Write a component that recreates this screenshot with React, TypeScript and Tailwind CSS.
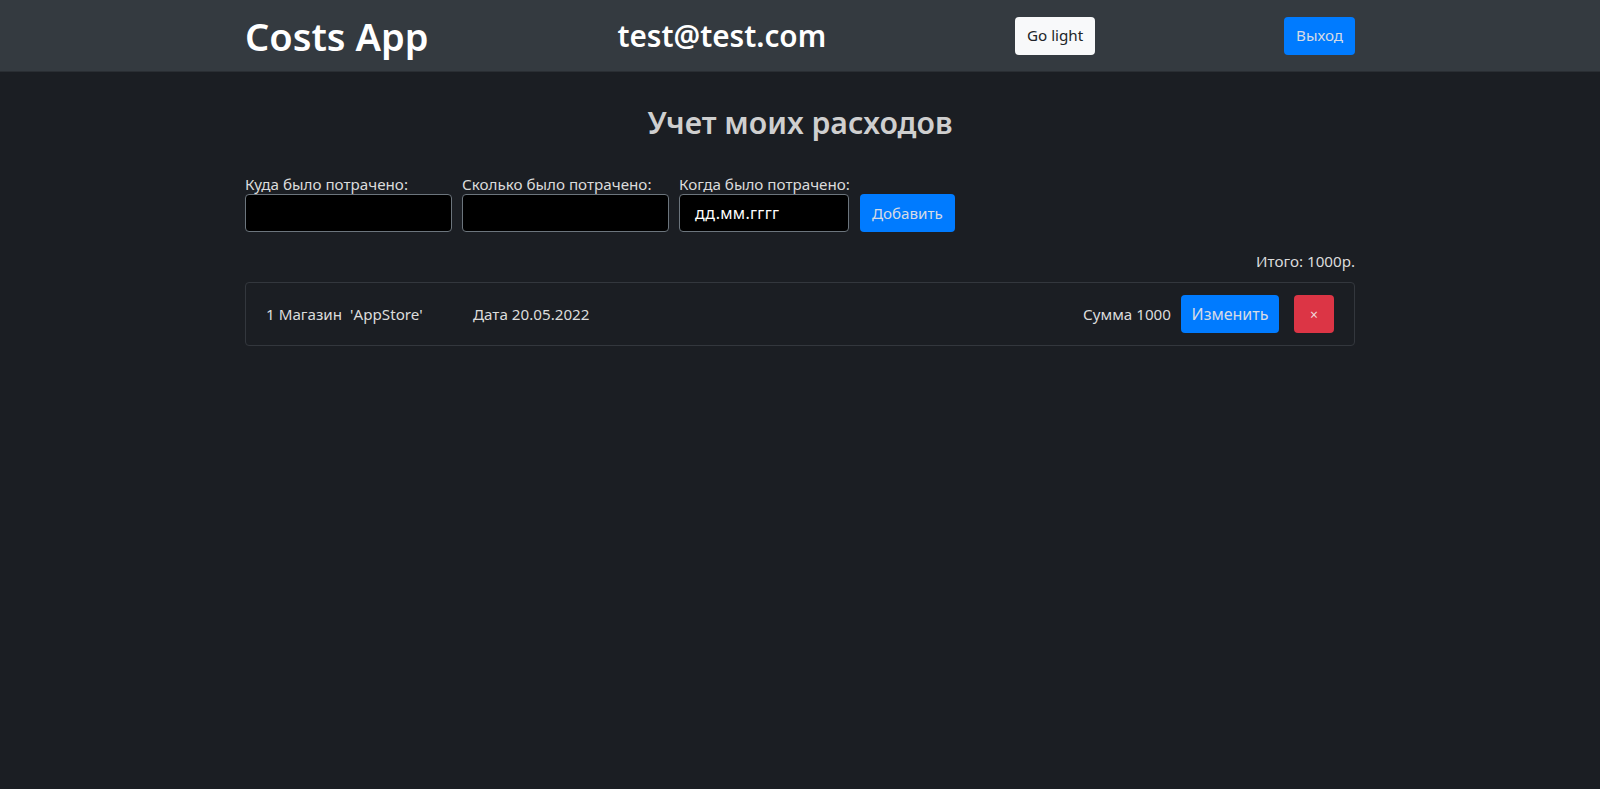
import React from "react";

export default function App() {
  const font = { fontFamily: '"Noto Sans", "Open Sans", sans-serif' };
  return (
    <div className="min-h-[789px] bg-[#1b1e23] text-[#dcdcdc]" style={font}>
      <header className="h-[72px] bg-[#343a40] border-b border-[#2a2e33]">
        <div className="mx-auto flex h-full w-[1110px] items-center justify-between">
          <h1 className="text-[38px] font-semibold leading-none text-white">Costs App</h1>
          <h2 className="text-[29.7px] font-semibold leading-none text-white">test@test.com</h2>
          <button className="h-[38px] rounded-[4px] bg-[#f8f9fa] px-3 text-[15.2px] text-[#212529]">Go light</button>
          <button className="h-[38px] rounded-[4px] bg-[#007bff] px-3 text-[15.2px] text-[#d6dbe6]">Выход</button>
        </div>
      </header>
      <main className="mx-auto w-[1110px] text-[15.2px]">
        <h2 className="pt-[32px] text-center text-[30.2px] font-semibold leading-[38px] text-[#cfcfcf]">Учет моих расходов</h2>
        <div className="mt-[32px] flex items-end gap-[10px]">
          <div className="flex flex-col">
            <label className="leading-[20px]">Куда было потрачено:</label>
            <input className="h-[38px] w-[207px] rounded-[4px] border border-[#6c757d] bg-black px-3 text-white outline-none" />
          </div>
          <div className="flex flex-col">
            <label className="leading-[20px]">Сколько было потрачено:</label>
            <input className="h-[38px] w-[207px] rounded-[4px] border border-[#6c757d] bg-black px-3 text-white outline-none" />
          </div>
          <div className="flex flex-col">
            <label className="leading-[20px]">Когда было потрачено:</label>
            <div className="flex h-[38px] w-[170px] items-center rounded-[4px] border border-[#6c757d] bg-black px-[15px] text-[16px] tracking-[0.3px] text-white">дд.мм.гггг</div>
          </div>
          <button className="h-[38px] rounded-[4px] bg-[#007bff] px-3 text-[#d6dbe6]">Добавить</button>
        </div>
        <div className="mt-[17px] text-right leading-[24px]">Итого: 1000р.</div>
        <div className="mt-[9px] flex h-[64px] items-center rounded-[4px] border border-[#33373d] px-[20px]">
          <span className="w-[207px]">1 Магазин&nbsp;&nbsp;'AppStore'</span>
          <span>Дата 20.05.2022</span>
          <span className="ml-auto">Сумма 1000</span>
          <button className="ml-[10px] h-[38px] w-[98px] rounded-[4px] bg-[#007bff] text-[16px] text-[#d6dbe6]">Изменить</button>
          <button className="ml-[15px] h-[38px] w-[40px] rounded-[4px] bg-[#dc3545] text-[14px] text-[#f0d6d9]">×</button>
        </div>
      </main>
    </div>
  );
}
